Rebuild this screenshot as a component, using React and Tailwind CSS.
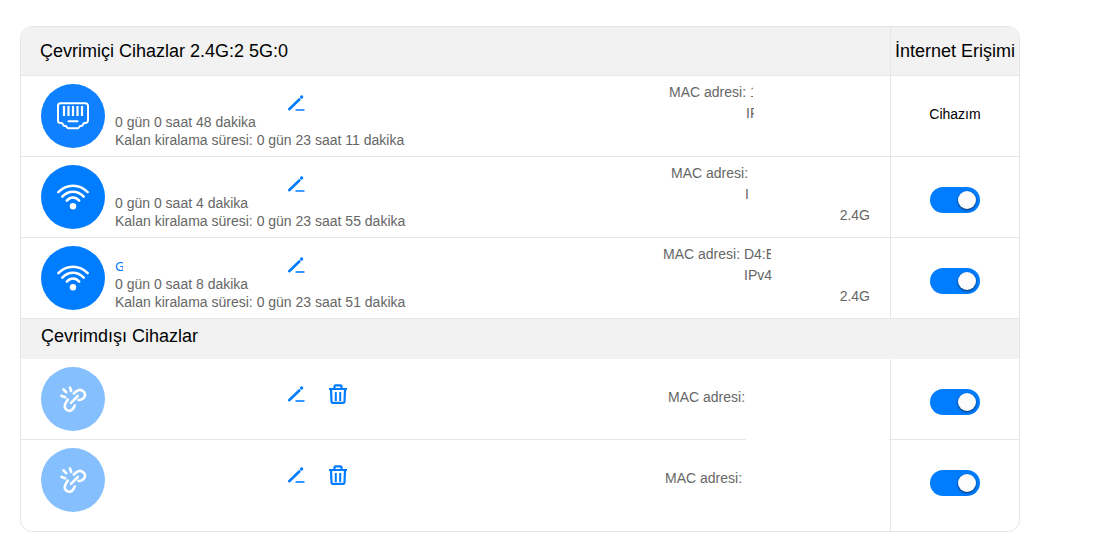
import React, { useState } from 'react';

const onlineDevices = [
  {
    id: 'lan-1',
    type: 'ethernet',
    name: '',
    uptime: '0 gün 0 saat 48 dakika',
    lease: '0 gün 23 saat 11 dakika',
    mac: '1',
    macBox: 'w-[201px]',
    macText: 'w-[84px]',
    ip: 'IP',
    ipBox: 'w-[124px]',
    ipText: 'w-2',
    band: '',
    own: true,
  },
  {
    id: 'wifi-1',
    type: 'wifi',
    name: '',
    uptime: '0 gün 0 saat 4 dakika',
    lease: '0 gün 23 saat 55 dakika',
    mac: '',
    macBox: 'w-[199px]',
    macText: 'w-20',
    ip: 'I',
    ipBox: 'w-[125px]',
    ipText: 'w-1',
    band: '2.4G',
  },
  {
    id: 'wifi-2',
    type: 'wifi',
    name: 'G',
    uptime: '0 gün 0 saat 8 dakika',
    lease: '0 gün 23 saat 51 dakika',
    mac: 'D4:E',
    macBox: 'w-[207px]',
    macText: 'w-[108px]',
    ip: 'IPv4',
    ipBox: 'w-[126px]',
    ipText: 'w-7',
    band: '2.4G',
  },
];

const offlineDevices = [
  { id: 'off-1', macBox: 'w-[202px]' },
  { id: 'off-2', macBox: 'w-[205px]' },
];

const EthernetIcon = () => (
  <svg viewBox="0 0 64 64" className="size-16" fill="none" stroke="#fff" strokeWidth="2" strokeLinecap="round" strokeLinejoin="round" aria-hidden="true">
    <path d="M19.5 19.3h25a2.500 2.500 0 0 1 2.500 2.500v14.700a2.500 2.500 0 0 1-2.500 2.500h-1a2 2 0 0 0-1.500 1.500a2 2 0 0 1-2 1.500h-1l-1 1.500a1.500 1.500 0 0 1-1.200.7h-9.600a1.500 1.500 0 0 1-1.200-.7l-1-1.500h-1a2 2 0 0 1-2-1.500a2 2 0 0 0-1.500-1.500h-1a2.500 2.500 0 0 1-2.500-2.500v-14.700a2.500 2.500 0 0 1 2.500-2.500z" />
    <path d="M23 22v10M27.500 22v10M32 22v10M36.500 22v10M41 22v10" strokeWidth="2.200" strokeLinecap="butt" />
    <path d="M27.500 37.200h9" />
  </svg>
);

const WifiIcon = () => (
  <svg viewBox="0 0 64 64" className="size-16" fill="none" stroke="#fff" strokeWidth="2.500" strokeLinecap="round" aria-hidden="true">
    <path d="M17.300 27.200C25.500 18.500 38.500 18.500 46.700 27.200M21.300 31.600C27.500 25 36.500 25 42.700 31.600M25.800 35.600C29.500 31.500 34.500 31.500 38.200 35.600" />
    <circle cx="32" cy="41.300" r="3.200" fill="#fff" stroke="none" />
  </svg>
);

const BrokenLinkIcon = () => (
  <svg viewBox="0 0 64 64" className="size-16" fill="none" stroke="#fff" strokeWidth="2.600" strokeLinecap="round" strokeLinejoin="round" aria-hidden="true">
    <path d="M32.800 26.500L35.500 24.200C38 22.500 41 22.700 43 25C44.600 27 44.100 29.500 42.300 31.200C40.700 32.600 39 33.200 37.500 33" />
    <path d="M26.800 32.500C25.500 34.500 23.900 36.500 23.700 39C23.500 41.800 25.700 43.800 28.300 43.800C30.300 43.800 31.500 42.500 32.500 41L33.800 38.500" />
    <path d="M30 35.800L36.800 29M29 20.500L30.200 24M22.500 22.300L25.200 25.200M20.500 28.900L24.200 30.200" />
  </svg>
);

const icons = {
  ethernet: { Icon: EthernetIcon, color: 'bg-[#0f80ff]' },
  wifi: { Icon: WifiIcon, color: 'bg-[#007dff]' },
  offline: { Icon: BrokenLinkIcon, color: 'bg-[#86bffd]' },
};

const DeviceIcon = ({ type }) => {
  const { Icon, color } = icons[type];
  return (
    <div className={`mt-2 size-16 shrink-0 rounded-full ${color}`}>
      <Icon />
    </div>
  );
};

const EditButton = () => (
  <button type="button" aria-label="Düzenle" className="size-5 cursor-pointer">
    <svg viewBox="0 0 20 20" className="size-5" fill="none" stroke="#007dff" strokeLinecap="round" aria-hidden="true">
      <path d="M3.200 16.200L13.300 6.500" strokeWidth="2.600" />
      <circle cx="15.600" cy="4" r="1.700" fill="#007dff" stroke="none" />
      <path d="M9.500 17h9" strokeWidth="1.600" strokeLinecap="butt" />
    </svg>
  </button>
);

const DeleteButton = () => (
  <button type="button" aria-label="Sil" className="size-5 cursor-pointer">
    <svg viewBox="0 0 20 20" className="size-5" fill="none" stroke="#007dff" strokeWidth="2.200" aria-hidden="true">
      <path d="M1 5h18M6.500 4.500V2.300a1 1 0 0 1 1-1h5a1 1 0 0 1 1 1v2.200M3 5.500l.5 12.300a1 1 0 0 0 1 1h11a1 1 0 0 0 1-1l.5-12.300" />
      <path d="M7.800 8v9M12.200 8v9" strokeWidth="2" />
    </svg>
  </button>
);

const AccessSwitch = ({ label }) => {
  const [enabled, setEnabled] = useState(true);

  return (
    <input
      type="checkbox"
      role="switch"
      aria-label={label}
      checked={enabled}
      onChange={() => setEnabled(!enabled)}
      className="mx-auto block h-[26px] w-[50px] cursor-pointer appearance-none rounded-full bg-gray-300 p-1 before:block before:size-[18px] before:rounded-full before:bg-[#fcfcfc] before:shadow-sm before:shadow-black/50 checked:bg-[#007dff] checked:before:ml-6"
    />
  );
};

const OnlineRow = ({ device }) => (
  <tr>
    <td className="h-[81px] border-b border-[#e6e6e6] p-0 pr-5 pl-5 align-top">
      <div className="flex">
        <DeviceIcon type={device.type} />
        <div className="ml-2.5 flex-1 pt-[19px] leading-[18px]">
          <div className="flex h-[18px]">
            <div className="w-2 overflow-hidden font-['Noto_Sans',sans-serif] text-[13px] text-[#007dff]">{device.name}</div>
            <div className="ml-[163px] -mt-0.5">
              <EditButton />
            </div>
          </div>
          <p>{device.uptime}</p>
          <p>Kalan kiralama süresi: {device.lease}</p>
        </div>
        <div className="flex flex-col items-end pt-1.5 leading-[21px] whitespace-nowrap">
          <div className={device.macBox}>
            <div className={`overflow-hidden ${device.macText}`}>MAC adresi: {device.mac}</div>
          </div>
          <div className={device.ipBox}>
            <div className={`overflow-hidden ${device.ipText}`}>{device.ip}</div>
          </div>
          <div>{device.band}</div>
        </div>
      </div>
    </td>
    <td className="border-b border-l border-[#e6e6e6] p-0 align-top">
      {device.own ? (
        <p className="pt-7 text-center leading-[21px] text-black">Cihazım</p>
      ) : (
        <div className="pt-[30px]">
          <AccessSwitch label={`İnternet Erişimi ${device.id}`} />
        </div>
      )}
    </td>
  </tr>
);

const OfflineRow = ({ device, last }) => (
  <tr>
    <td className={`relative p-0 pr-5 pl-5 align-top ${last ? 'h-[91px]' : 'h-[81px] border-b border-[#e6e6e6]'}`}>
      <div className="flex">
        <DeviceIcon type="offline" />
        <div className="ml-[181px] flex flex-1 gap-[22px] pt-[25px]">
          <EditButton />
          <DeleteButton />
        </div>
        <div className={`pt-7 leading-[21px] whitespace-nowrap ${device.macBox}`}>MAC adresi:</div>
      </div>
      {!last && <div className="absolute right-px -bottom-px h-px w-[143px] bg-white" />}
    </td>
    <td className={`border-l border-[#e6e6e6] p-0 pt-[30px] align-top ${last ? '' : 'border-b'}`}>
      <AccessSwitch label={`İnternet Erişimi ${device.id}`} />
    </td>
  </tr>
);

const App = () => {
  return (
    <main className="bg-white pt-[26px] pr-[90px] pl-5 font-['Liberation_Sans',Arial,sans-serif] text-sm text-[#666]">
      <div className="overflow-hidden rounded-xl border border-[#e6e6e6]">
        <table className="w-full table-fixed border-separate border-spacing-0">
          <colgroup>
            <col />
            <col className="w-[129px]" />
          </colgroup>
          <thead>
            <tr className="bg-[#f2f2f2] text-lg text-black">
              <th className="h-[49px] border-b border-[#e6e6e6] p-0 pl-[19px] text-left font-normal">Çevrimiçi Cihazlar 2.4G:2 5G:0</th>
              <th className="border-b border-l border-[#e6e6e6] p-0 text-center font-normal whitespace-nowrap">İnternet Erişimi</th>
            </tr>
          </thead>
          <tbody>
            {onlineDevices.map((device) => (
              <OnlineRow key={device.id} device={device} />
            ))}
            <tr className="bg-[#f2f2f2] text-lg text-black">
              <th colSpan="2" className="h-10 p-0 pb-1.5 pl-5 text-left font-normal">Çevrimdışı Cihazlar</th>
            </tr>
            {offlineDevices.map((device, i) => (
              <OfflineRow key={device.id} device={device} last={i === offlineDevices.length - 1} />
            ))}
          </tbody>
        </table>
      </div>
    </main>
  );
};

export default App;
